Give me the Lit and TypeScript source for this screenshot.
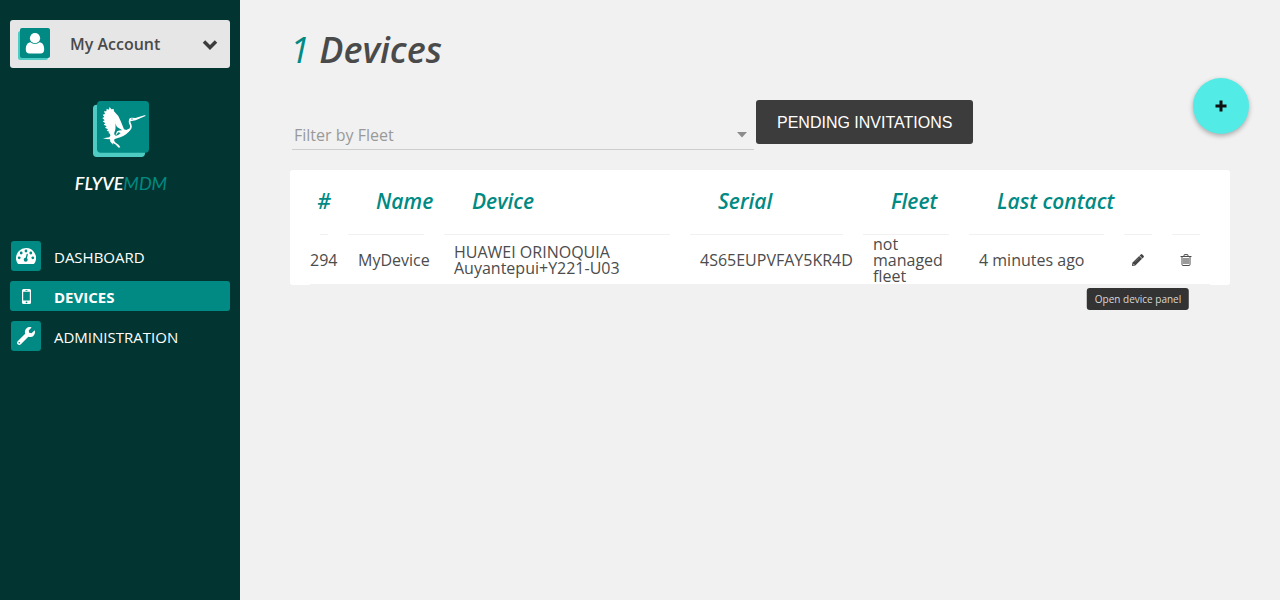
import { LitElement, html, css, svg } from "lit";
import { customElement, property, state } from "lit/decorators.js";
import { classMap } from "lit/directives/class-map.js";

interface Device {
  id: number;
  name: string;
  model: string;
  serial: string;
  fleet: string;
  lastContact: string;
}

const gaugeIcon = svg`<svg viewBox="0 0 20 16" width="20" height="16" aria-hidden="true">
  <path fill="#fff" d="M10 0A10 10 0 0 0 0 10c0 2 .5 3.700 1.500 5.300.3.500.6.700 1 .7h15c.400 0 .7-.2 1-.7A10 10 0 0 0 10 0Z"/>
  <g fill="#008a83"><circle cx="3.200" cy="9.800" r="1.400"/><circle cx="5.200" cy="5" r="1.400"/><circle cx="10" cy="3" r="1.400"/><circle cx="14.800" cy="5" r="1.400"/><circle cx="16.800" cy="9.800" r="1.400"/><circle cx="9.700" cy="11.800" r="2"/></g>
  <path d="M9.900 11.500 11.200 6.500" stroke="#008a83" stroke-width="1.300" stroke-linecap="round"/>
</svg>`;

const phoneIcon = svg`<svg viewBox="0 0 9 15" width="9" height="15" aria-hidden="true">
  <path fill="#fff" fill-rule="evenodd" d="M1.500 0h6A1.500 1.500 0 0 1 9 1.500v12A1.500 1.500 0 0 1 7.500 15h-6A1.500 1.500 0 0 1 0 13.500v-12A1.500 1.500 0 0 1 1.500 0ZM1.200 2.800v8.700h6.600V2.800ZM3.500 1.100v.6h2v-.6ZM4.500 12.400a.9.9 0 1 0 0 1.800.9.9 0 0 0 0-1.800Z"/>
</svg>`;

const wrenchIcon = svg`<svg viewBox="0 0 512 512" width="18" height="18" aria-hidden="true">
  <path fill="#fff" d="M507.730 109.100c-2.240-9.030-13.540-12.090-20.120-5.510l-74.360 74.360-67.880-11.310-11.310-67.880 74.360-74.360c6.620-6.620 3.430-17.900-5.660-20.160-47.380-11.740-99.550.91-136.580 37.930-39.640 39.640-50.550 97.100-34.050 147.200L18.740 402.760c-24.990 24.990-24.990 65.510 0 90.500 24.990 24.990 65.510 24.990 90.500 0l213.210-213.210c50.120 16.710 107.470 5.680 147.370-34.220 37.070-37.070 49.700-89.320 37.910-136.730zM64 472c-13.250 0-24-10.750-24-24 0-13.260 10.750-24 24-24s24 10.740 24 24c0 13.250-10.750 24-24 24z"/>
</svg>`;

const pencilIcon = svg`<svg viewBox="0 0 12 12" width="12" height="12" aria-hidden="true">
  <path fill="#444" d="M8.800.4a1.100 1.100 0 0 1 1.500 0l1.300 1.300a1.100 1.100 0 0 1 0 1.500l-1.200 1.200-2.800-2.800ZM7.200 2l2.800 2.800L3.300 11.600 0 12l.3-3.200Z"/>
  <path d="m1.100 9.800 1.200 1.200" stroke="#fff" stroke-width=".7"/>
  <path d="m3 7.800 4.200-4.200" stroke="#999" stroke-width=".5"/>
</svg>`;

const trashIcon = svg`<svg viewBox="0 0 12 12" width="12" height="12" fill="none" stroke="#4c4c4c" aria-hidden="true">
  <path fill="#aaa" stroke="none" d="M3 4h6v6H3Z"/>
  <path d="M.5 2.500h11M3.800 2.300 4.300.6h3.400l.5 1.700M2 2.500v8q0 1 1 1h6q1 0 1-1v-8"/>
  <path stroke="#8a8a8a" d="M4 4v6M6 4v6M8 4v6"/>
</svg>`;

const avatarIcon = svg`<svg viewBox="0 0 34 34" width="34" height="34" aria-hidden="true">
  <rect x="1" y="4" width="30" height="29" rx="2.500" fill="#4ecbc3"/>
  <rect x="3" y="1" width="30" height="30" rx="2" fill="#008a83"/>
  <path fill="#fff" d="M13.500 15.200c-3.200.3-4.700 3-4.700 7.200 0 2.500 1.300 4.100 3.700 4.100h11c2.400 0 3.700-1.600 3.700-4.100 0-4.200-1.500-6.900-4.700-7.200a6.500 6.500 0 0 1-9 0Z"/>
  <circle cx="18" cy="11.200" r="5.100" fill="#fff"/>
</svg>`;

const brandMark = svg`<svg viewBox="0 0 168 168" width="56" height="56" aria-hidden="true">
  <rect x="0" y="11" width="156" height="157" rx="11" fill="#4ecbc3"/>
  <rect x="12" y="0" width="156" height="155" rx="11" fill="#008a83"/>
  <path fill="#fff" d="M30 112 49 109Q54 103 51 98L46 96 49 92 41 89 45 85 36 80 41 76 32 71 37 67 29 61 35 58 28 51 34 48 29 41 36 39 33 31 40 31 41 23 47 26 50 18 55 25 62 24 63 31Q77 43 83 60L93 85 100 87 107 83 111 88Q101 102 84 108L65 114Q61 119 68 125Q78 130 82 139L77 140 67 130 59 126 61 132 52 122 51 115Q40 115 30 112Z"/>
  <path fill="#008a83" d="M65 56Q66 68 72 78L88 88Q80 87 72 91L67 104Q61 99 66 89Q70 79 65 56ZM67 105Q76 103 83 96L76 94Z"/>
  <path fill="none" stroke="#fff" stroke-width="5" d="M104 91Q117 82 113 72Q107 62 112 55"/>
  <path fill="#fff" d="M108 59Q108 49 117 50L127 51 157 42 157 45 128 58 116 60Z"/>
  <circle cx="117" cy="54" r="2" fill="#008a83"/>
</svg>`;

const menu = [
  { label: "DASHBOARD", href: "#dashboard", icon: gaugeIcon, active: false },
  { label: "DEVICES", href: "#devices", icon: phoneIcon, active: true },
  { label: "ADMINISTRATION", href: "#administration", icon: wrenchIcon, active: false },
];

@customElement("side-bar")
class SideBar extends LitElement {
  static styles = css`
    :host {
      display: block;
      box-sizing: border-box;
      width: 240px;
      padding: 20px 10px;
      background: #023531;
      font-family: "Open Sans", sans-serif;
    }
    .account {
      display: flex;
      align-items: center;
      box-sizing: border-box;
      width: 100%;
      height: 48px;
      padding: 0 12px 0 7px;
      border: 0;
      border-radius: 3px;
      background: #e6e6e6;
      color: #4a4a4a;
      font: 600 16px/24px "Open Sans", sans-serif;
      text-align: left;
    }
    .account-label {
      flex: 1;
      padding-left: 19px;
    }
    .brand {
      display: flex;
      flex-direction: column;
      align-items: center;
      gap: 15px;
      margin-top: 33px;
      padding-left: 2px;
    }
    .wordmark {
      color: #fff;
      font: italic 600 18px/22px Lato, sans-serif;
    }
    .wordmark-accent {
      color: #008a83;
      font-weight: 400;
    }
    .menu {
      display: flex;
      flex-direction: column;
      gap: 10px;
      margin-top: 47px;
    }
    .item {
      display: flex;
      align-items: center;
      gap: 13px;
      height: 30px;
      padding-left: 1px;
      border-radius: 3px;
      color: #fff;
      font-size: 15px;
      text-decoration: none;
    }
    .item.active {
      background: #008a83;
      font-weight: 700;
    }
    .label {
      padding-top: 2px;
    }
    .icon {
      display: flex;
      align-items: center;
      justify-content: center;
      width: 30px;
      height: 30px;
      border-radius: 3px;
      background: #008a83;
    }
    svg {
      display: block;
      flex: none;
    }
  `;

  render() {
    return html`
      <button class="account" type="button">
        ${avatarIcon}
        <span class="account-label">My Account</span>
        <svg viewBox="0 0 16 11" width="16" height="11" aria-hidden="true">
          <path d="m2 2.500 6 6 6-6" fill="none" stroke="#3c3c3c" stroke-width="3.500" />
        </svg>
      </button>
      <div class="brand">
        ${brandMark}
        <span class="wordmark">FLYVE<span class="wordmark-accent">MDM</span></span>
      </div>
      <nav class="menu">
        ${menu.map(
          (m) => html`<a class=${classMap({ item: true, active: m.active })} href=${m.href}
            ><span class="icon">${m.icon}</span><span class="label">${m.label}</span></a
          >`
        )}
      </nav>
    `;
  }
}

@customElement("device-table")
class DeviceTable extends LitElement {
  @property({ attribute: false }) devices: Device[] = [];

  static styles = css`
    :host {
      display: block;
      padding: 0 20px;
      border-radius: 3px;
      background: #fff;
      color: #4c4c4c;
      font: 16px/16px "Open Sans", sans-serif;
    }
    .table {
      width: 100%;
      table-layout: fixed;
      border-collapse: separate;
      border-spacing: 0;
    }
    .id { width: 28px; }
    .name { width: 96px; }
    .serial { width: 173px; }
    .fleet { width: 106px; }
    .contact { width: 155px; }
    .action { width: 48px; }
    .head {
      height: 65px;
      padding: 0 10px;
      color: #008a83;
      font: italic 600 21px/30px "Open Sans", sans-serif;
      text-align: left;
      vertical-align: bottom;
      white-space: nowrap;
    }
    .title {
      display: block;
      height: 30px;
      padding: 0 0 18px 28px;
      border-bottom: 1px solid #f1f1f1;
    }
    .head:first-child .title {
      display: flex;
      justify-content: center;
      padding-left: 0;
    }
    .cell {
      height: 49px;
      padding: 0 0 0 20px;
      border-bottom: 1px solid #f1f1f1;
      vertical-align: middle;
    }
    .cell:first-child {
      padding: 0;
    }
    .nowrap {
      white-space: nowrap;
    }
    .action-cell {
      padding: 0;
    }
    .tool {
      position: relative;
      display: flex;
      align-items: center;
      justify-content: center;
      width: 48px;
      height: 32px;
      padding: 0;
      border: 0;
      background: none;
    }
    .tip {
      position: absolute;
      top: 44px;
      left: 50%;
      transform: translateX(-50%);
      padding: 0 8px;
      border-radius: 3px;
      background: #333;
      color: #d8d8d8;
      font: 10px/22px "Open Sans", sans-serif;
      white-space: nowrap;
    }
  `;

  render() {
    return html`
      <table class="table">
        <colgroup>
          <col class="id" /><col class="name" /><col /><col class="serial" /><col class="fleet" /><col class="contact" /><col class="action" /><col class="action" />
        </colgroup>
        <thead>
          <tr>
            ${["#", "Name", "Device", "Serial", "Fleet", "Last contact", "", ""].map(
              (t) => html`<th class="head" scope="col"><span class="title">${t}</span></th>`
            )}
          </tr>
        </thead>
        <tbody>
          ${this.devices.map(
            (d) => html`<tr>
              <td class="cell">${d.id}</td>
              <td class="cell">${d.name}</td>
              <td class="cell">${d.model}</td>
              <td class="cell nowrap">${d.serial}</td>
              <td class="cell">${d.fleet}</td>
              <td class="cell nowrap">${d.lastContact}</td>
              <td class="cell action-cell">
                <button class="tool" type="button" aria-label="Open device panel">
                  ${pencilIcon}<span class="tip" role="tooltip">Open device panel</span>
                </button>
              </td>
              <td class="cell action-cell">
                <button class="tool" type="button" aria-label="Delete device">${trashIcon}</button>
              </td>
            </tr>`
          )}
        </tbody>
      </table>
    `;
  }
}

@customElement("app-root")
class AppRoot extends LitElement {
  @state() private devices: Device[] = [
    {
      id: 294,
      name: "MyDevice",
      model: "HUAWEI ORINOQUIA Auyantepui+Y221-U03",
      serial: "4S65EUPVFAY5KR4D",
      fleet: "not managed fleet",
      lastContact: "4 minutes ago",
    },
  ];

  static styles = css`
    :host {
      display: flex;
      min-height: 100vh;
      background: #f1f1f1;
      color: #4a4a4a;
      font-family: "Open Sans", sans-serif;
    }
    side-bar {
      flex: none;
    }
    .main {
      position: relative;
      flex: 1;
      min-width: 0;
      padding: 20px 50px;
    }
    .title {
      margin: 0;
      font: italic 600 36px/60px "Open Sans", sans-serif;
    }
    .count {
      color: #008a83;
      font-weight: 400;
    }
    .filters {
      display: flex;
      align-items: flex-end;
      gap: 2px;
      margin: 20px 0;
      padding-left: 2px;
    }
    .field {
      display: grid;
      align-items: center;
      width: 50%;
      max-width: 462px;
    }
    .select,
    .arrow {
      grid-area: 1 / 1;
    }
    .select {
      appearance: none;
      width: 100%;
      height: 30px;
      padding: 0 24px 0 2px;
      border: 0;
      border-bottom: 1px solid #cdcdcd;
      border-radius: 0;
      background: none;
      color: #999;
      font: 16px/24px "Open Sans", sans-serif;
    }
    .arrow {
      justify-self: end;
      margin-right: 6px;
      pointer-events: none;
    }
    .pending {
      height: 44px;
      margin-bottom: 6px;
      padding: 2px 21px 0;
      border: 0;
      border-radius: 3px;
      background: #3c3c3c;
      color: #fff;
      font: 16px/24px "Liberation Sans", Arial, sans-serif;
      white-space: nowrap;
    }
    .add {
      position: absolute;
      top: 78px;
      right: 31px;
      display: flex;
      align-items: center;
      justify-content: center;
      width: 56px;
      height: 56px;
      padding: 0;
      border: 0;
      border-radius: 50%;
      background: #53ebe6;
      box-shadow: 0 2px 5px rgba(0, 0, 0, 0.3);
    }
  `;

  render() {
    return html`
      <side-bar></side-bar>
      <main class="main">
        <h1 class="title"><span class="count">${this.devices.length}</span> Devices</h1>
        <div class="filters">
          <div class="field">
            <select class="select" aria-label="Filter by Fleet">
              <option>Filter by Fleet</option>
            </select>
            <svg class="arrow" viewBox="0 0 12 6" width="12" height="6" aria-hidden="true">
              <path d="M1 0h10L6 5.500Z" fill="#8c8c8c" />
            </svg>
          </div>
          <button class="pending" type="button">PENDING INVITATIONS</button>
        </div>
        <device-table .devices=${this.devices}></device-table>
        <button class="add" type="button" aria-label="Add device">
          <svg viewBox="0 0 12 12" width="12" height="12" aria-hidden="true">
            <path d="M6 .5v11M.5 6h11" stroke="#111" stroke-width="3" />
          </svg>
        </button>
      </main>
    `;
  }
}
